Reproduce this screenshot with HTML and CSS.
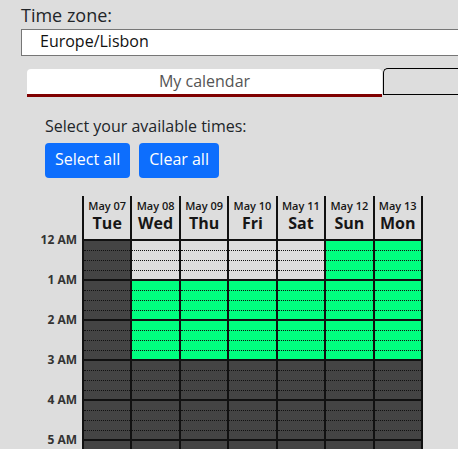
FILE: index.html
```html
<!DOCTYPE html>
<html lang="en">
<head>
<meta charset="utf-8">
<title>Availability</title>
<link rel="stylesheet" href="styles.css">
</head>
<body>
<div class="tz-label">Time zone:</div>
<div class="tz-input">Europe/Lisbon</div>

<div class="tabs">
  <div class="tab active">My calendar</div>
  <div class="tab other"></div>
</div>

<div class="intro">
  <div class="hint">Select your available times:</div>
  <div class="buttons">
    <button class="btn">Select all</button>
    <button class="btn">Clear all</button>
  </div>
</div>

<div class="schedule">
  <div class="times">
    <div class="spacer"></div>
    <div class="tl">12 AM</div>
    <div class="tl">1 AM</div>
    <div class="tl">2 AM</div>
    <div class="tl">3 AM</div>
    <div class="tl">4 AM</div>
    <div class="tl">5 AM</div>
  </div>
  <div class="days">
    <div class="day">
      <div class="head"><div class="date">May 07</div><div class="dow">Tue</div></div>
      <div class="h dk"><i></i><i></i><i></i><i></i></div>
      <div class="h dk"><i></i><i></i><i></i><i></i></div>
      <div class="h dk"><i></i><i></i><i></i><i></i></div>
      <div class="h dk"><i></i><i></i><i></i><i></i></div>
      <div class="h dk"><i></i><i></i><i></i><i></i></div>
      <div class="h dk"><i></i><i></i><i></i><i></i></div>
    </div>
    <div class="day">
      <div class="head"><div class="date">May 08</div><div class="dow">Wed</div></div>
      <div class="h lt"><i></i><i></i><i></i><i></i></div>
      <div class="h gn"><i></i><i></i><i></i><i></i></div>
      <div class="h gn"><i></i><i></i><i></i><i></i></div>
      <div class="h dk"><i></i><i></i><i></i><i></i></div>
      <div class="h dk"><i></i><i></i><i></i><i></i></div>
      <div class="h dk"><i></i><i></i><i></i><i></i></div>
    </div>
    <div class="day">
      <div class="head"><div class="date">May 09</div><div class="dow">Thu</div></div>
      <div class="h lt"><i></i><i></i><i></i><i></i></div>
      <div class="h gn"><i></i><i></i><i></i><i></i></div>
      <div class="h gn"><i></i><i></i><i></i><i></i></div>
      <div class="h dk"><i></i><i></i><i></i><i></i></div>
      <div class="h dk"><i></i><i></i><i></i><i></i></div>
      <div class="h dk"><i></i><i></i><i></i><i></i></div>
    </div>
    <div class="day">
      <div class="head"><div class="date">May 10</div><div class="dow">Fri</div></div>
      <div class="h lt"><i></i><i></i><i></i><i></i></div>
      <div class="h gn"><i></i><i></i><i></i><i></i></div>
      <div class="h gn"><i></i><i></i><i></i><i></i></div>
      <div class="h dk"><i></i><i></i><i></i><i></i></div>
      <div class="h dk"><i></i><i></i><i></i><i></i></div>
      <div class="h dk"><i></i><i></i><i></i><i></i></div>
    </div>
    <div class="day">
      <div class="head"><div class="date">May 11</div><div class="dow">Sat</div></div>
      <div class="h lt"><i></i><i></i><i></i><i></i></div>
      <div class="h gn"><i></i><i></i><i></i><i></i></div>
      <div class="h gn"><i></i><i></i><i></i><i></i></div>
      <div class="h dk"><i></i><i></i><i></i><i></i></div>
      <div class="h dk"><i></i><i></i><i></i><i></i></div>
      <div class="h dk"><i></i><i></i><i></i><i></i></div>
    </div>
    <div class="day">
      <div class="head"><div class="date">May 12</div><div class="dow">Sun</div></div>
      <div class="h gn"><i></i><i></i><i></i><i></i></div>
      <div class="h gn"><i></i><i></i><i></i><i></i></div>
      <div class="h gn"><i></i><i></i><i></i><i></i></div>
      <div class="h dk"><i></i><i></i><i></i><i></i></div>
      <div class="h dk"><i></i><i></i><i></i><i></i></div>
      <div class="h dk"><i></i><i></i><i></i><i></i></div>
    </div>
    <div class="day">
      <div class="head"><div class="date">May 13</div><div class="dow">Mon</div></div>
      <div class="h gn"><i></i><i></i><i></i><i></i></div>
      <div class="h gn"><i></i><i></i><i></i><i></i></div>
      <div class="h gn"><i></i><i></i><i></i><i></i></div>
      <div class="h dk"><i></i><i></i><i></i><i></i></div>
      <div class="h dk"><i></i><i></i><i></i><i></i></div>
      <div class="h dk"><i></i><i></i><i></i><i></i></div>
    </div>
  </div>
</div>
</body>
</html>
```

FILE: styles.css
```css
html {
  overflow: hidden;
}
body {
  margin: 0;
  background: #dddddd;
  font-family: "Open Sans", "Noto Sans", sans-serif;
  color: #212529;
}
.tz-label {
  padding: 3px 0 0 21px;
  font-size: 18px;
  line-height: 24px;
}
.tz-input {
  margin: 2px 0 0 21px;
  width: 460px;
  height: 27px;
  box-sizing: border-box;
  border: 1px solid #767676;
  background: #ffffff;
  padding-left: 18px;
  font-size: 16px;
  line-height: 22px;
  color: #111;
}
.tabs {
  display: flex;
  align-items: flex-start;
  margin: 12px 0 0 27px;
}
.tab {
  box-sizing: border-box;
  flex: none;
}
.tab.active {
  margin-top: 1px;
  width: 355px;
  height: 28px;
  background: #ffffff;
  border-bottom: 3px solid #800000;
  border-radius: 4px 4px 0 0;
  text-align: center;
  font-size: 16px;
  line-height: 25px;
  color: #555;
}
.tab.other {
  margin-left: 1px;
  width: 200px;
  height: 27px;
  border: 1px solid #000;
  border-right: none;
  border-radius: 5px 0 0 0;
  background: #dddddd;
}
.intro {
  padding-left: 45px;
}
.hint {
  margin-top: 17px;
  font-size: 16px;
  line-height: 24px;
}
.buttons {
  display: flex;
  gap: 9px;
  margin-top: 5px;
}
.btn {
  height: 35px;
  box-sizing: border-box;
  padding: 0 10px 2px;
  border: none;
  border-radius: 4px;
  background: #0d6efd;
  color: #ffffff;
  font-family: inherit;
  font-size: 16px;
  line-height: 33px;
}
.schedule {
  display: flex;
  margin: 18px 0 0 20px;
}
.times {
  width: 62px;
  box-sizing: border-box;
  padding-right: 5px;
  text-align: right;
  flex: none;
}
.spacer {
  height: 24px;
}
.tl {
  height: 40px;
  line-height: 40px;
  font-size: 12px;
  font-weight: 700;
  color: #333;
  white-space: nowrap;
}
.days {
  display: grid;
  grid-template-columns: repeat(7, 48.43px);
  border-right: 2px solid #111;
}
.day {
  border-left: 2px solid #111;
}
.head {
  height: 45px;
  box-sizing: border-box;
  border-bottom: 2px solid #111;
  padding-top: 1.5px;
  text-align: center;
  color: #161616;
}
.date {
  font-size: 11px;
  font-weight: 600;
  line-height: 15px;
}
.dow {
  font-size: 16px;
  font-weight: 700;
  line-height: 21px;
}
.h i {
  display: block;
  height: 10px;
  box-sizing: border-box;
  border-bottom: 1px dotted #111;
}
.h i:last-child {
  border-bottom: 2px solid #111;
}
.dk {
  background: #444444;
}
.lt {
  background: #dddddd;
}
.gn {
  background: #00ff7f;
}
```
